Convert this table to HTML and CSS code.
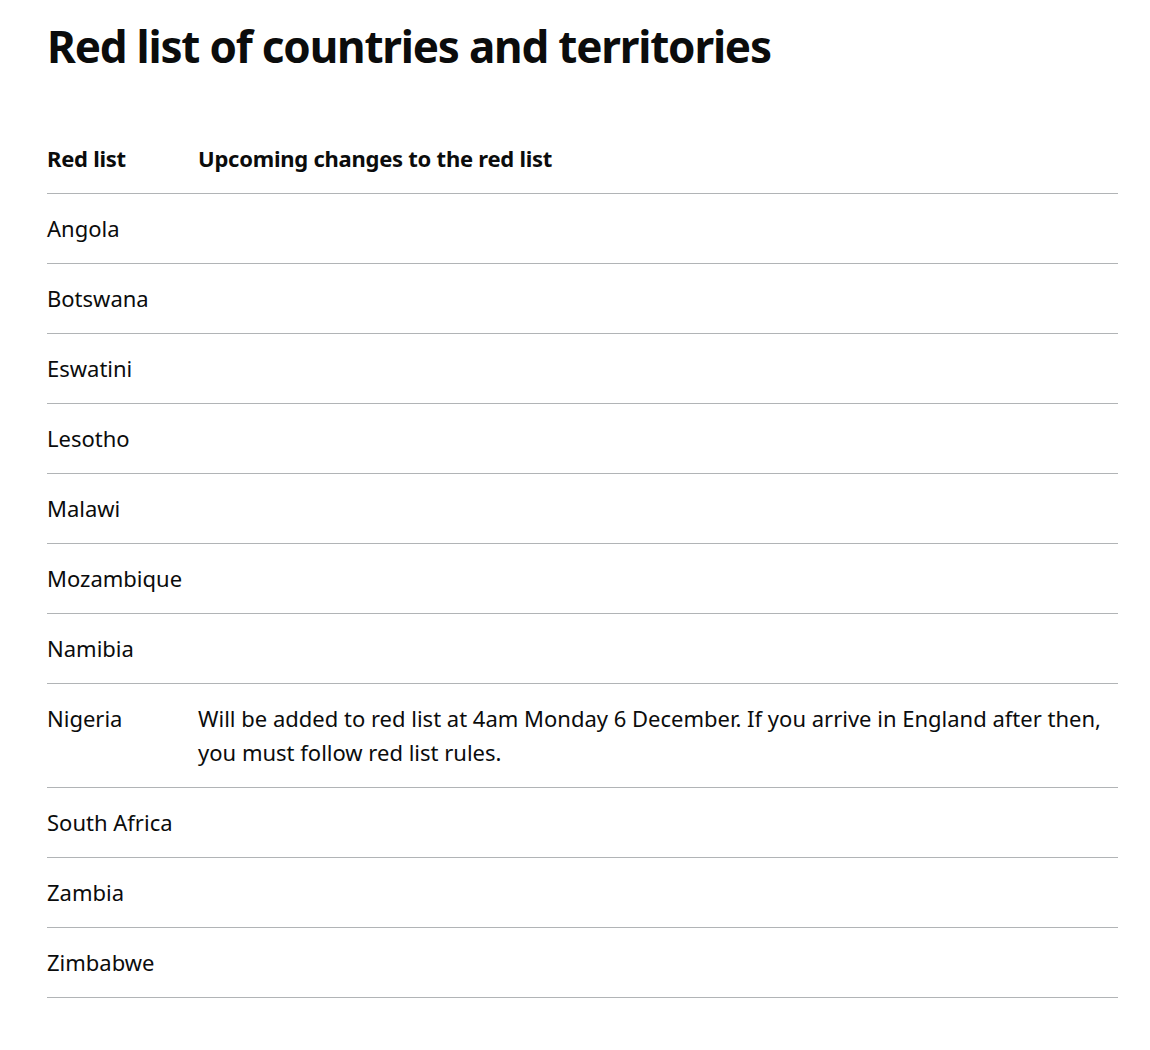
FILE: index.html
```html
<!DOCTYPE html>
<html lang="en">
<head>
<meta charset="utf-8">
<title>Red list of countries and territories</title>
<link rel="stylesheet" href="styles.css">
</head>
<body>
<main class="page">
  <h1 class="title">Red list of countries and territories</h1>
  <table class="table">
    <thead>
      <tr>
        <th class="col-country">Red list</th>
        <th>Upcoming changes to the red list</th>
      </tr>
    </thead>
    <tbody>
      <tr><td>Angola</td><td></td></tr>
      <tr><td>Botswana</td><td></td></tr>
      <tr><td>Eswatini</td><td></td></tr>
      <tr><td>Lesotho</td><td></td></tr>
      <tr><td>Malawi</td><td></td></tr>
      <tr><td>Mozambique</td><td></td></tr>
      <tr><td>Namibia</td><td></td></tr>
      <tr><td>Nigeria</td><td>Will be added to red list at 4am Monday 6 December. If you arrive in England after then, you must follow red list rules.</td></tr>
      <tr><td>South Africa</td><td></td></tr>
      <tr><td>Zambia</td><td></td></tr>
      <tr><td>Zimbabwe</td><td></td></tr>
    </tbody>
  </table>
</main>
</body>
</html>
```

FILE: styles.css
```css
html, body {
  margin: 0;
  padding: 0;
  background: #ffffff;
}

body {
  font-family: "Noto Sans", "Liberation Sans", Arial, sans-serif;
  color: #0b0c0c;
}

.page {
  padding: 19px 32px 40px 47px;
}

.title {
  margin: 0 0 51px 0;
  font-size: 44px;
  line-height: 54px;
  font-weight: 700;
  letter-spacing: -1.2px;
}

.table {
  width: 1071px;
  border-collapse: collapse;
  border-spacing: 0;
  font-size: 22px;
  line-height: 34px;
}

.table th,
.table td {
  text-align: left;
  vertical-align: top;
  padding: 17px 16px 18px 0;
  border-bottom: 1px solid #b1b4b6;
}

.table th:last-child,
.table td:last-child {
  padding-right: 0;
}

.table th {
  font-weight: 700;
  letter-spacing: -0.25px;
}

.col-country {
  width: 135px;
}
```
